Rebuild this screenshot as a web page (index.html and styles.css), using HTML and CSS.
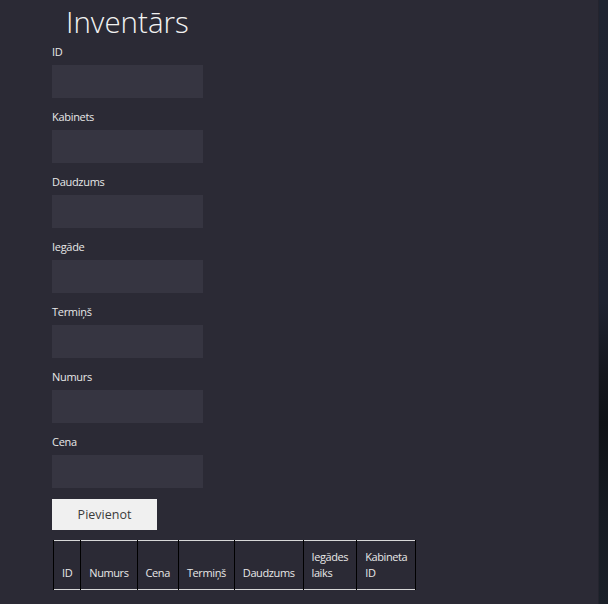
FILE: index.html
```html
<!DOCTYPE html>
<html lang="lv">
<head>
<meta charset="utf-8">
<title>Inventārs</title>
<link rel="stylesheet" href="styles.css">
</head>
<body>
<div class="page">
  <main class="content">
    <h1 class="title">Inventārs</h1>
    <form class="form">
      <label class="field"><span class="label">ID</span><input class="input" type="text"></label>
      <label class="field"><span class="label">Kabinets</span><input class="input" type="text"></label>
      <label class="field"><span class="label">Daudzums</span><input class="input" type="text"></label>
      <label class="field"><span class="label">Iegāde</span><input class="input" type="text"></label>
      <label class="field"><span class="label">Termiņš</span><input class="input" type="text"></label>
      <label class="field"><span class="label">Numurs</span><input class="input" type="text"></label>
      <label class="field"><span class="label">Cena</span><input class="input" type="text"></label>
      <button class="button" type="button">Pievienot</button>
    </form>
    <table class="table">
      <thead>
        <tr>
          <th>ID</th>
          <th>Numurs</th>
          <th>Cena</th>
          <th>Termiņš</th>
          <th>Daudzums</th>
          <th>Iegādes<br>laiks</th>
          <th>Kabineta<br>ID</th>
        </tr>
      </thead>
    </table>
  </main>
  <div class="strip"></div>
</div>
</body>
</html>
```
FILE: styles.css
```css
html, body {
  margin: 0;
  padding: 0;
  height: 100%;
}
body {
  background: #2b2a35;
  font-family: "Open Sans", "Noto Sans", sans-serif;
  color: #e6e6e6;
  overflow: hidden;
}
.page {
  display: flex;
  height: 604px;
}
.content {
  flex: 1;
  padding-left: 52px;
}
.strip {
  width: 9px;
  background: linear-gradient(to bottom, #1f2431 0%, #1e2230 50%, #14161d 62%, #0f1116 70%, #161a22 85%, #1b2029 100%);
  border-left: 1px solid #24242e;
}
.title {
  margin: 0 0 0 14px;
  padding-top: 2px;
  font-size: 29.5px;
  font-weight: 300;
  line-height: 40px;
  color: #f2f2f2;
}
.form {
  display: flex;
  flex-direction: column;
  align-items: flex-start;
  margin-top: 1px;
}
.field {
  display: flex;
  flex-direction: column;
  margin-bottom: 10px;
}
.label {
  font-size: 11px;
  line-height: 17px;
  height: 17px;
  margin-bottom: 5px;
  letter-spacing: -0.3px;
  color: #e8e8e8;
}
.input {
  width: 151px;
  height: 33px;
  box-sizing: border-box;
  border: none;
  margin: 0;
  background: #363541;
  outline: none;
}
.button {
  width: 105px;
  height: 31px;
  margin-top: 1px;
  border: none;
  background: #f0f0f0;
  color: #3a3a3a;
  font-family: "Open Sans", "Noto Sans", sans-serif;
  font-size: 12.5px;
  padding: 0;
}
.table {
  margin-top: 10px;
  margin-left: 1px;
  border-collapse: collapse;
  border-top: 1px solid #d8d8d8;
  border-bottom: 1px solid #d8d8d8;
}
.table th {
  border-left: 1px solid #000;
  border-right: 1px solid #000;
  padding: 8px 8px 8px 8px;
  font-size: 11px;
  font-weight: 400;
  line-height: 16px;
  letter-spacing: -0.4px;
  text-align: left;
  vertical-align: bottom;
  color: #e8e8e8;
}
```
